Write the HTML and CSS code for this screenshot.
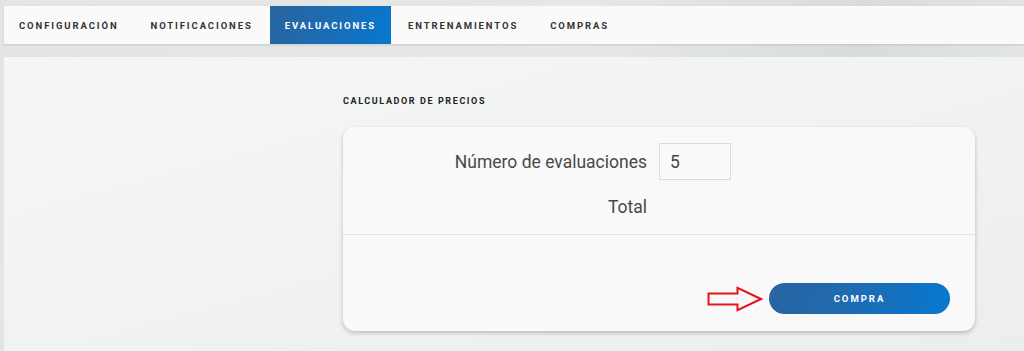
FILE: index.html
```html
<!DOCTYPE html>
<html lang="es">
<head>
    <meta charset="UTF-8">
    <meta name="viewport" content="width=device-width, initial-scale=1.0">
    <title>Evaluaciones</title>
    <link rel="stylesheet" href="styles.css">
</head>
<body>
    <div class="tabs">
        <a class="tab">Configuración</a>
        <a class="tab">Notificaciones</a>
        <a class="tab active">Evaluaciones</a>
        <a class="tab">Entrenamientos</a>
        <a class="tab">Compras</a>
    </div>

    <div class="panel">
        <div class="calc">
            <h3 class="calc-title">Calculador de precios</h3>
            <div class="card">
                <div class="card-body">
                    <div class="form-row">
                        <label class="form-label" for="qty">Número de evaluaciones</label>
                        <input class="form-input" id="qty" type="text" value="5">
                    </div>
                    <div class="form-row total-row">
                        <span class="form-label">Total</span>
                        <span></span>
                    </div>
                </div>
                <div class="card-footer">
                    <svg class="arrow" width="56" height="26" viewBox="0 0 56 26">
                        <path d="M1.5 7.5 H30.5 V1.8 L54 13 L30.5 24.2 V18.5 H1.5 Z" fill="none" stroke="#e3141b" stroke-width="2"/>
                    </svg>
                    <button class="btn-buy">Compra</button>
                </div>
            </div>
        </div>
    </div>
</body>
</html>
```

FILE: styles.css
```css
* {
    margin: 0;
    padding: 0;
    box-sizing: border-box;
}

body {
    font-family: Roboto, "Liberation Sans", Arial, sans-serif;
    background: linear-gradient(100deg, #e3e5e5 0%, #e6e8e8 55%, #d9dcdc 80%, #e6e8e8 100%);
    color: #333333;
    height: 351px;
    overflow: hidden;
    padding: 6px 0 0 4px;
}

.tabs {
    display: flex;
    height: 38px;
    background-color: #fafafa;
    box-shadow: 0 1px 2px rgba(0, 0, 0, 0.12);
}

.tab {
    display: flex;
    align-items: center;
    padding: 0 15px;
    margin-right: 2px;
    font-size: 9.5px;
    font-weight: 700;
    letter-spacing: 1.9px;
    text-transform: uppercase;
    color: #333333;
    cursor: pointer;
}

.tab.active {
    background: linear-gradient(110deg, #2a649f 0%, #1a6db6 55%, #0679cf 100%);
    color: #ffffff;
}

.panel {
    margin-top: 13px;
    height: 300px;
    background: linear-gradient(165deg, #f5f7f7 0%, #f1f3f3 50%, #eceeee 100%);
    display: grid;
    grid-template-columns: 339px 632px;
}

.calc {
    grid-column: 2;
    padding-top: 38px;
}

.calc-title {
    font-size: 9px;
    font-weight: 700;
    letter-spacing: 1.6px;
    text-transform: uppercase;
    color: #222222;
    line-height: 12px;
    margin-bottom: 20px;
}

.card {
    background-color: #f9f9f9;
    border-radius: 12px;
    box-shadow: 0 2px 4px rgba(0, 0, 0, 0.22);
    height: 204px;
}

.card-body {
    padding: 16px 0 0 0;
    height: 108px;
    border-bottom: 1px solid #e2e4e4;
}

.form-row {
    display: grid;
    grid-template-columns: 316px 1fr;
    align-items: center;
}

.form-label {
    text-align: right;
    padding-right: 12px;
    font-size: 17.5px;
    font-weight: 400;
    color: #484848;
}

.form-input {
    width: 72px;
    height: 37px;
    border: 1px solid #dcdcdc;
    background-color: #fafafa;
    padding: 0 10px;
    font-family: inherit;
    font-size: 17.5px;
    color: #444444;
    outline: none;
}

.total-row {
    margin-top: 17px;
}

.card-footer {
    display: flex;
    justify-content: flex-end;
    align-items: center;
    gap: 6px;
    padding: 48px 25px 0 0;
}

.btn-buy {
    width: 181px;
    height: 31px;
    border: none;
    border-radius: 16px;
    background: linear-gradient(110deg, #2a649f 0%, #1a6db6 55%, #0679cf 100%);
    color: #ffffff;
    font-family: inherit;
    font-size: 9.5px;
    font-weight: 700;
    letter-spacing: 2px;
    text-transform: uppercase;
    cursor: pointer;
}
```
